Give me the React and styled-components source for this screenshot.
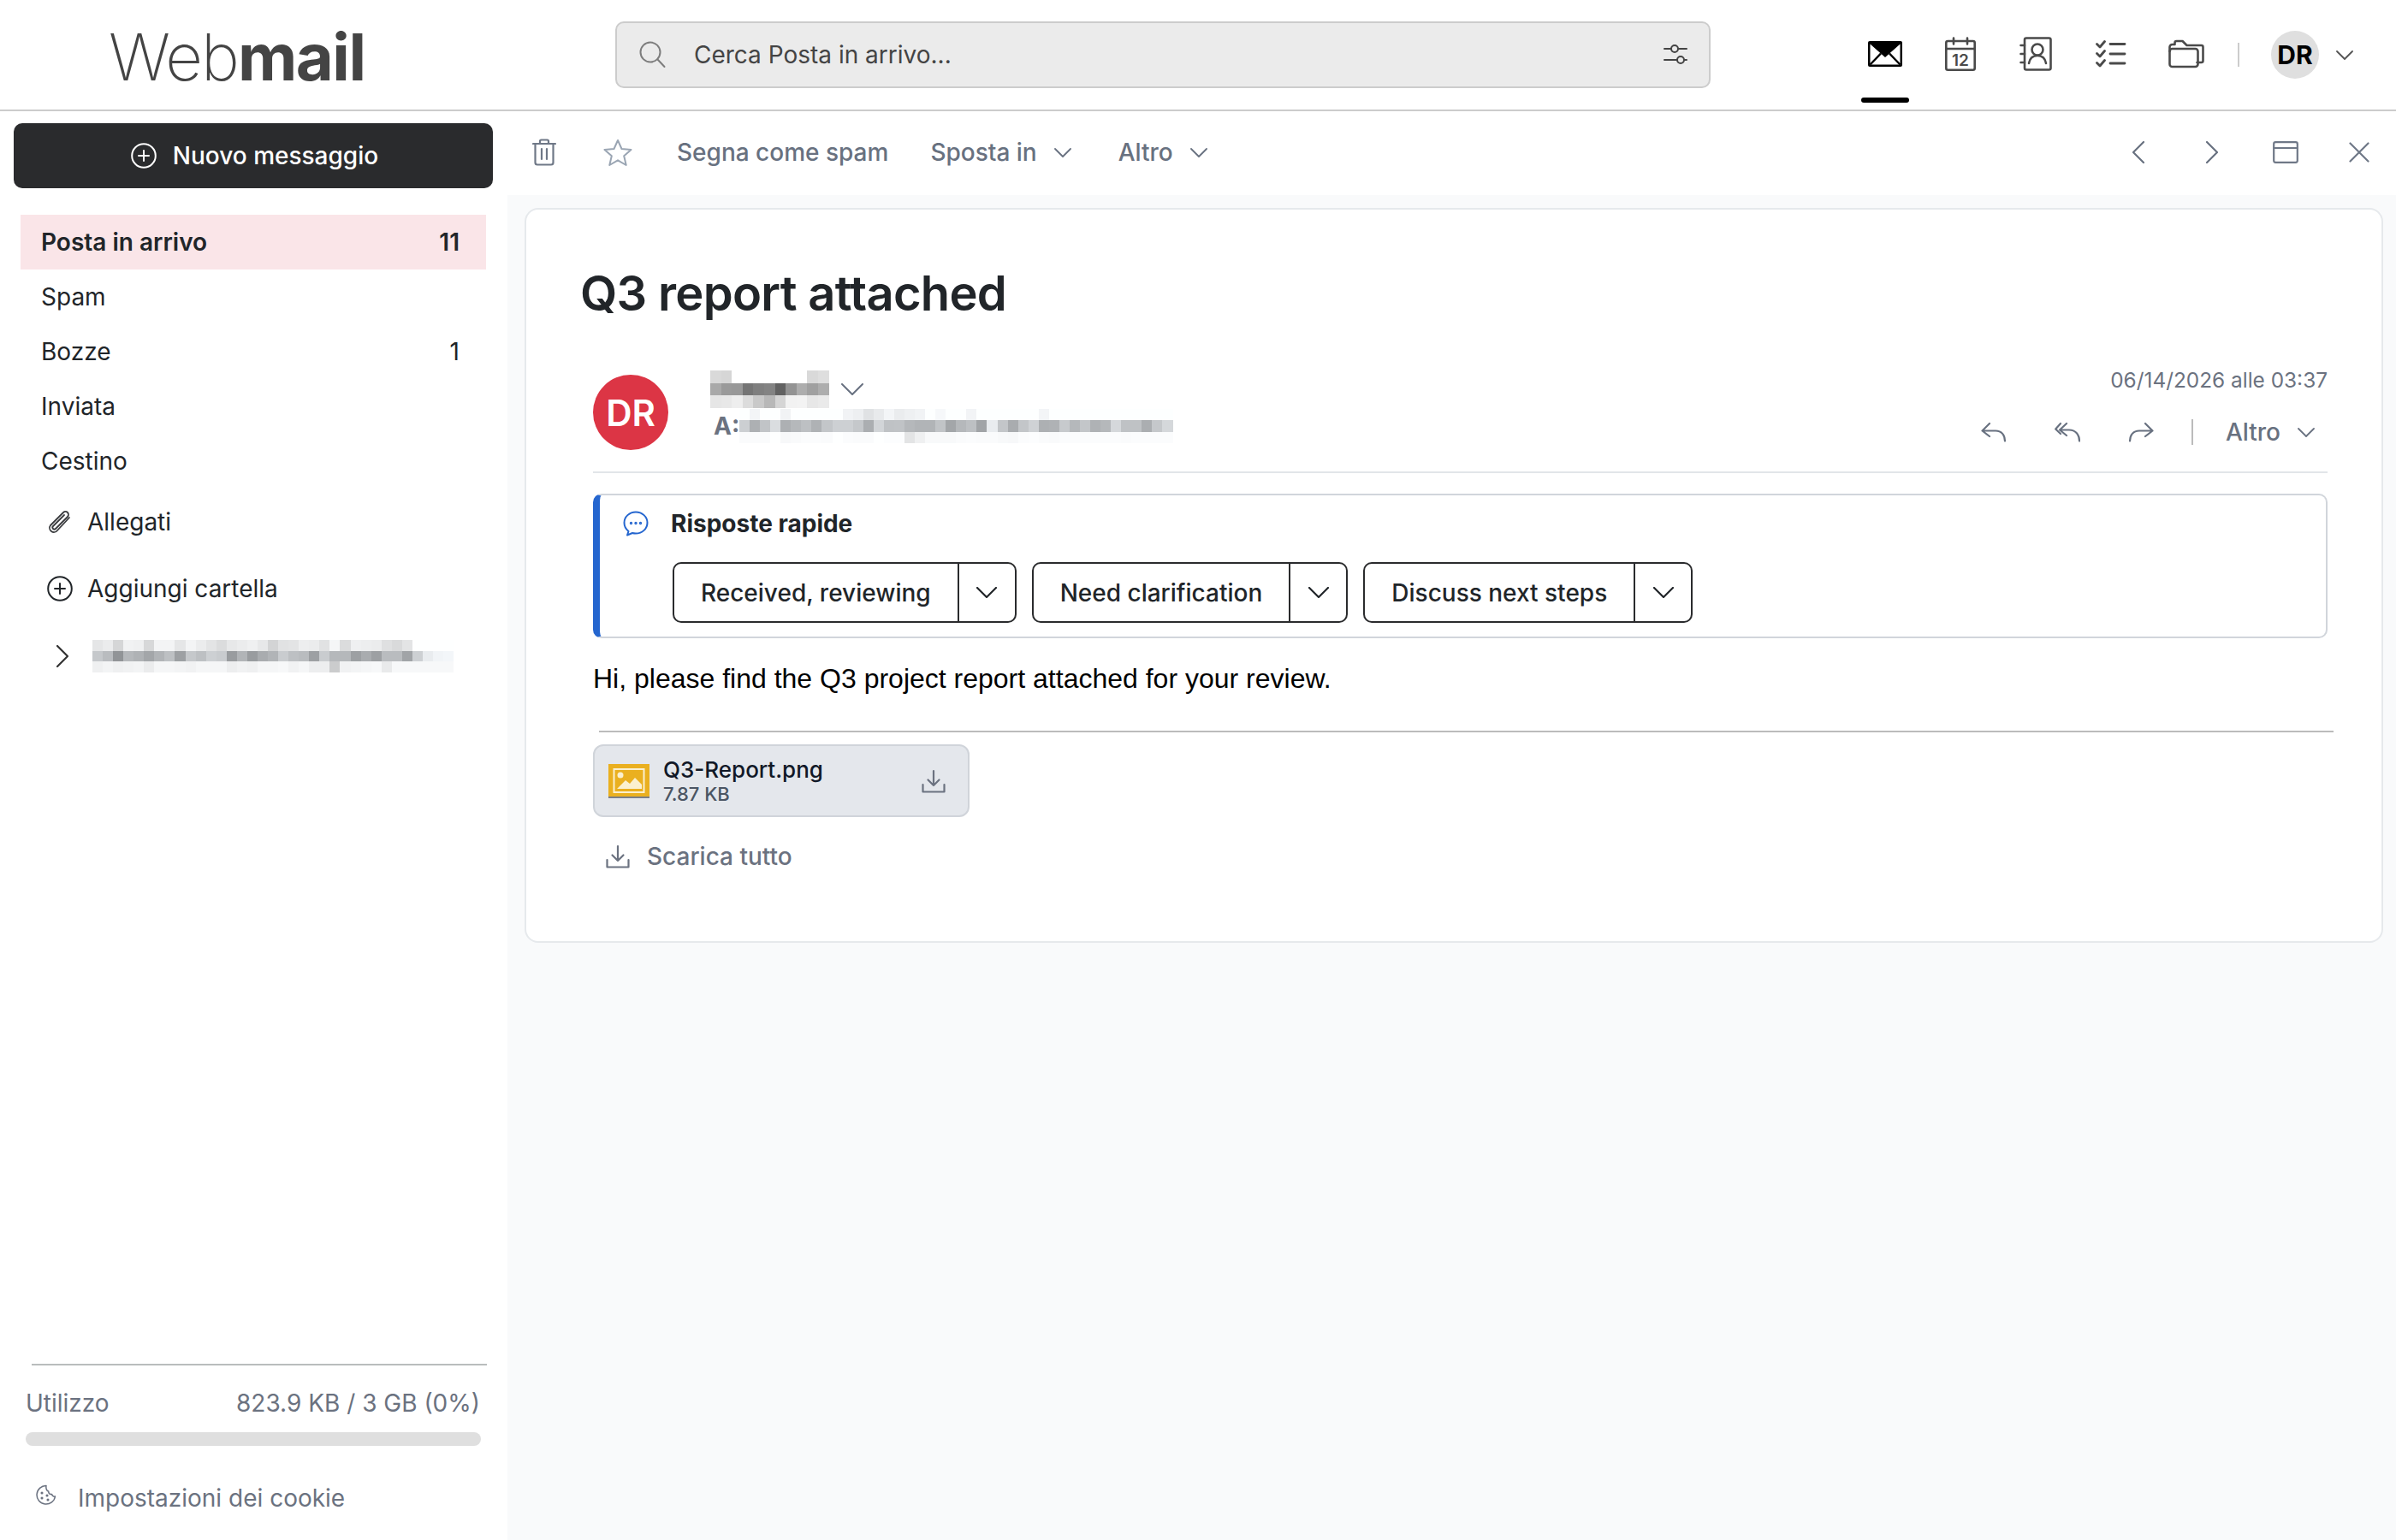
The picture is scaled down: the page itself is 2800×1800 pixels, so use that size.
import React from 'react';
import styled, { createGlobalStyle } from 'styled-components';

const GlobalStyle = createGlobalStyle`
  html, body { margin: 0; padding: 0; background: #fff; }
  body { font-family: Inter, "Liberation Sans", sans-serif; color: #212529; }
`;

const Page = styled.div`
  width: 2800px;
  height: 1800px;
  display: flex;
  flex-direction: column;
  overflow: hidden;
`;

/* top bar */
const Header = styled.header`
  height: 130px;
  box-sizing: border-box;
  border-bottom: 2px solid #ccc;
  display: flex;
  align-items: center;
  flex-shrink: 0;
`;
const Logo = styled.div`
  width: 592px;
  margin-left: 127px;
  flex-shrink: 0;
  font-size: 76px;
  line-height: 76px;
  letter-spacing: -2px;
  color: #444;
  font-weight: 200;
  position: relative;
  top: 2px;
  b { font-weight: 700; letter-spacing: -1.5px; }
`;
const SearchBox = styled.div`
  width: 1280px;
  height: 78px;
  box-sizing: border-box;
  border: 2px solid #ccc;
  border-radius: 10px;
  background: #ebebeb;
  display: flex;
  align-items: center;
  padding: 0 25px;
  font-size: 28px;
  color: #444;
`;
const SearchText = styled.span`
  margin-left: 33px;
  flex: 1;
`;
const Nav = styled.nav`
  margin-left: 160px;
  display: flex;
  align-items: center;
  height: 128px;
`;
const NavItem = styled.div`
  width: 88px;
  height: 128px;
  display: flex;
  align-items: center;
  justify-content: center;
  position: relative;
  padding-bottom: 0;
  svg { position: relative; top: -1px; }
  ${(p) => p.$active && `
    &::after {
      content: "";
      position: absolute;
      left: 16px;
      top: 114px;
      width: 56px;
      height: 6px;
      border-radius: 3px;
      background: #000;
    }
  `}
`;
const NavDivider = styled.div`
  width: 2px;
  height: 28px;
  background: #ccc;
  margin-left: 16px;
`;
const UserAvatar = styled.div`
  width: 56px;
  height: 56px;
  border-radius: 50%;
  background: #dfdfdf;
  color: #000;
  font-size: 30px;
  font-weight: 700;
  display: flex;
  align-items: center;
  justify-content: center;
  margin-left: 37px;
  margin-right: 20px;
`;

/* layout */
const Body = styled.div`
  flex: 1;
  display: flex;
  min-height: 0;
`;

/* sidebar */
const Sidebar = styled.aside`
  width: 593px;
  flex-shrink: 0;
  box-sizing: border-box;
  display: flex;
  flex-direction: column;
  background: #fff;
`;
const ComposeButton = styled.button`
  margin: 14px 17px 0 16px;
  height: 76px;
  border: 0;
  border-radius: 10px;
  background: #2a2b2d;
  color: #fff;
  font: 500 28px Inter, sans-serif;
  display: flex;
  align-items: center;
  justify-content: center;
  gap: 19px;
  padding-left: 9px;
`;
const FolderList = styled.div`
  margin: 31px 25px 0 24px;
  display: flex;
  flex-direction: column;
`;
const FolderRow = styled.div`
  height: 64px;
  flex-shrink: 0;
  display: flex;
  align-items: center;
  justify-content: space-between;
  padding: 0 31px 0 24px;
  font-size: 28px;
  font-weight: ${(p) => (p.$active ? 600 : 400)};
  background: ${(p) => (p.$active ? '#fae5e8' : 'transparent')};
`;
const ExtraRow = styled.div`
  height: 78px;
  display: flex;
  align-items: center;
  gap: 17px;
  padding-left: 55px;
  font-size: 28px;
`;
const TreeRow = styled.div`
  height: 80px;
  display: flex;
  align-items: center;
  gap: 28px;
  padding-left: 66px;
`;
const SideFooter = styled.div`
  margin-top: auto;
  height: 206px;
  box-sizing: border-box;
  display: flex;
  flex-direction: column;
`;
const FooterRule = styled.div`
  height: 2px;
  margin: 0 24px 0 37px;
  background: #b9bdbd;
`;
const UsageRow = styled.div`
  display: flex;
  justify-content: space-between;
  margin: 27px 32px 0 30px;
  font-size: 28px;
  line-height: 34px;
  color: #6b7280;
`;
const UsageTrack = styled.div`
  height: 16px;
  margin: 17px 31px 0 30px;
  border-radius: 8px;
  background: #dfdfdf;
`;
const CookieRow = styled.div`
  display: flex;
  align-items: center;
  gap: 25px;
  margin: 44px 0 0 41px;
  font-size: 28px;
  line-height: 34px;
  color: #6b7280;
  svg { position: relative; top: -4px; }
`;

/* mail pane */
const Main = styled.main`
  flex: 1;
  min-width: 0;
  display: flex;
  flex-direction: column;
`;
const Toolbar = styled.div`
  height: 98px;
  flex-shrink: 0;
  display: flex;
  align-items: center;
  background: #fff;
  padding-bottom: 2px;
  box-sizing: border-box;
`;
const IconButton = styled.div`
  width: 86px;
  height: 60px;
  display: flex;
  align-items: center;
  justify-content: center;
`;
const ToolText = styled.div`
  display: flex;
  align-items: center;
  gap: 20px;
  margin-left: ${(p) => p.$gap}px;
  font-size: 28px;
  font-weight: 500;
  color: #687180;
`;
const ToolSpacer = styled.div`
  flex: 1;
`;
const Content = styled.div`
  flex: 1;
  background: #f9fafb;
  padding: 15px 15px 0 20px;
`;
const Card = styled.article`
  box-sizing: border-box;
  height: 859px;
  border: 2px solid #e6e9ec;
  border-radius: 16px;
  background: #fff;
  padding: 64px 63px 0 78px;
`;
const Subject = styled.h1`
  margin: 0 0 0 -15px;
  font-size: 56px;
  line-height: 68px;
  font-weight: 600;
  letter-spacing: -0.7px;
  color: #212529;
`;
const SenderRow = styled.div`
  margin-top: 55px;
  height: 121px;
  box-sizing: border-box;
  border-bottom: 2px solid #e2e5e9;
  display: flex;
`;
const SenderAvatar = styled.div`
  width: 88px;
  height: 88px;
  margin-top: 6px;
  border-radius: 50%;
  background: #dc3545;
  color: #fff;
  font-size: 42px;
  font-weight: 600;
  display: flex;
  align-items: center;
  justify-content: center;
  flex-shrink: 0;
`;
const SenderInfo = styled.div`
  margin-left: 49px;
  display: flex;
  flex-direction: column;
  gap: 2px;
`;
const NameLine = styled.div`
  display: flex;
  align-items: center;
  gap: 14px;
  height: 44px;
  svg { position: relative; top: 1px; }
`;
const ToLine = styled.div`
  display: flex;
  align-items: center;
  font-size: 28px;
  font-weight: 700;
  color: #6b7280;
  width: 538px;
  padding-left: 4px;
  box-sizing: border-box;
  justify-content: space-between;
`;
const MetaColumn = styled.div`
  margin-left: auto;
  display: flex;
  flex-direction: column;
  align-items: flex-end;
`;
const DateText = styled.div`
  font-size: 24.4px;
  line-height: 24px;
  color: #6b7280;
`;
const ActionRow = styled.div`
  display: flex;
  align-items: center;
  margin-top: 33px;
  height: 32px;
`;
const ActionIcon = styled.div`
  width: 86px;
  display: flex;
  justify-content: center;
`;
const ActionRule = styled.div`
  width: 2px;
  height: 30px;
  background: #bbb;
  margin: 0 38px 0 16px;
`;
const ActionMore = styled.div`
  display: flex;
  align-items: center;
  gap: 20px;
  font-size: 28px;
  font-weight: 500;
  color: #687180;
  margin-right: 15px;
`;
const QuickBox = styled.section`
  margin-top: 24px;
  height: 169px;
  box-sizing: border-box;
  border: 2px solid #d1d5db;
  border-left: 8px solid #2566cf;
  border-radius: 10px;
`;
const QuickHead = styled.div`
  height: 65px;
  display: flex;
  align-items: center;
  gap: 26px;
  padding-left: 27px;
  font-size: 28px;
  font-weight: 700;
`;
const QuickButtons = styled.div`
  margin: 13px 0 0 85px;
  display: flex;
  gap: 18px;
`;
const SplitButton = styled.div`
  height: 71px;
  box-sizing: border-box;
  border: 2px solid #2a2b2d;
  border-radius: 10px;
  display: flex;
  align-items: center;
  font-size: 28px;
  font-weight: 500;
  color: #212529;
`;
const SplitLabel = styled.span`
  padding: 0 31px;
  height: 100%;
  display: flex;
  align-items: center;
  border-right: 2px solid #2a2b2d;
`;
const SplitCaret = styled.span`
  width: 65px;
  display: flex;
  justify-content: center;
`;
const MessageBody = styled.p`
  margin: 24px 0 0;
  font-family: "Liberation Sans", Arial, sans-serif;
  font-size: 32px;
  line-height: 46px;
  color: #000;
`;
const BodyRule = styled.hr`
  margin: 38px -7px 0 7px;
  border: 0;
  height: 2px;
  background: #bbb;
`;
const AttachmentChip = styled.div`
  margin-top: 14px;
  width: 440px;
  height: 85px;
  box-sizing: border-box;
  border: 2px solid #d0d4da;
  border-radius: 12px;
  background: #e4e7ec;
  display: flex;
  align-items: center;
  padding: 0 26px 0 16px;
`;
const AttachmentInfo = styled.div`
  margin-left: 16px;
  flex: 1;
  display: flex;
  flex-direction: column;
`;
const AttachmentName = styled.div`
  font-size: 26px;
  line-height: 31px;
  font-weight: 500;
  color: #111827;
`;
const AttachmentSize = styled.div`
  font-size: 22px;
  line-height: 26px;
  font-weight: 500;
  color: #4b5563;
`;
const DownloadAll = styled.div`
  margin: 26px 0 0 15px;
  height: 40px;
  display: flex;
  align-items: center;
  gap: 20px;
  font-size: 28px;
  font-weight: 500;
  color: #6b7280;
`;

const Glyph = styled.svg`
  display: block;
  flex-shrink: 0;
  fill: none;
  stroke: ${(p) => p.$color || 'currentColor'};
  stroke-width: ${(p) => p.$weight || 2};
  stroke-linecap: round;
  stroke-linejoin: round;
`;

const Icon = ({ w, h = w, color, weight, children }) => (
  <Glyph width={w} height={h} viewBox={`0 0 ${w} ${h}`} $color={color} $weight={weight}>{children}</Glyph>
);

const Chevron = ({ w = 20, color = '#687180', dir = 'down', weight = 1.8 }) => {
  if (dir === 'left') return <Icon w={14} h={26} color={color} weight={2.2}><path d="M13 1 1 13l12 12" /></Icon>;
  if (dir === 'right') return <Icon w={14} h={26} color={color} weight={2.2}><path d="m1 1 12 12L1 25" /></Icon>;
  const h = Math.round(w * 0.55);
  return <Icon w={w} h={h} color={color} weight={weight}><path d={`M1 1 ${w / 2} ${h - 1} ${w - 1} 1`} /></Icon>;
};

const PlusCircle = ({ size = 30, color }) => (
  <Icon w={size} h={size} color={color}>
    <circle cx={size / 2} cy={size / 2} r={size / 2 - 1.2} />
    <path d={`M${size / 2} ${size * 0.3}v${size * 0.4}M${size * 0.3} ${size / 2}h${size * 0.4}`} />
  </Icon>
);

const DownloadIcon = ({ color = '#6b7280' }) => (
  <Icon w={28} h={28} color={color} weight={2.2}>
    <path d="M14 2v17M7.5 12.5 14 19l6.500-6.500M1.500 18v8.500h25V18" />
  </Icon>
);

const ReplyIcon = () => (
  <Icon w={30} h={24} color="#687180" weight={2.2}>
    <path d="M10 2 1.500 10.500 10 17M1.500 10.500H17c7 0 11 5 11 12" />
  </Icon>
);
const ReplyAllIcon = () => (
  <Icon w={30} h={24} color="#687180" weight={2.2}>
    <path d="M7 2 1.200 8.500 7 14M14 2 6 9.500 14 16M6.500 9.500H17c7 0 12 5 12 13" />
  </Icon>
);
const ForwardIcon = () => (
  <Icon w={30} h={24} color="#687180" weight={2.2}>
    <path d="M20 2l8.500 8.500L20 17M28.500 10.500H13c-7 0-11 5-11 12" />
  </Icon>
);

const MAIL_DARK = '#4a4a4a';

// pixelated blocks hiding the addresses
const Mosaic = ({ rows, cell, rowH }) => {
  const cols = Math.max(...rows.map((r) => r.length));
  return (
    <svg width={cols * cell} height={rows.length * rowH} shapeRendering="crispEdges" style={{ display: 'block', flexShrink: 0 }}>
      {rows.map((row, y) => row.map((g, x) => (
        <rect key={`${x}-${y}`} x={x * cell} y={y * rowH} width={cell + 0.5} height={rowH + 0.5} fill={g} />
      )))}
    </svg>
  );
};
const shades = (s, tint = 0) => s.split(' ').map((v) => {
  const n = parseInt(v, 16);
  return `rgb(${n - tint},${n},${Math.min(255, n + tint)})`;
});

const nameBlur = [
  shades('d9 d6 ff ff ff ff ff ff ff d9 de'),
  shades('a9 9a 98 75 7f 83 62 93 ad a0 ad'),
  shades('e6 e8 ee dc c9 b8 d5 f2 f3 e7 ea'),
];
const toBlur = [
  shades('ff f5 ff ff f3 ff ff ff ff ff f3 ef e2 ea f5 ec f0 f3 ff f8 ff ff f4 ff ff ff ff ff ff f5 ff ff ff ff ff ff ff ff ff ff ff ff', 2),
  shades('cf b0 c4 dd b0 b8 c0 b2 c6 d0 d0 c8 ae d5 c2 c3 b8 b4 b4 c4 a6 b8 c0 a4 ec c6 ac c6 d2 b0 b2 ca b8 c6 b2 b8 d8 c2 c2 ae c8 d8', 3),
  shades('fb fb fb ff f8 fa fc fc fb ff fc fb fb ff fd fd e4 f0 f9 f9 f9 fb fc fb fb f9 f8 fc fd fb fa fc fc fc fc fc fc fb fc fc fc fc', 1),
];
const folderBlur = [
  shades('e6 ec d6 f2 f0 d8 f4 f4 e6 f4 ec e4 dc e8 ec f0 e8 d4 e2 e4 ee ec e2 f6 dc f0 ee ec e0 da e4 ff ff ff ff', 1),
  shades('c8 bc 94 b8 b2 a6 b4 c0 a0 c8 c0 d0 cc 9c b4 9c ac b4 cc c0 bc a0 cc b8 b8 a0 ac a0 bc bc a4 d0 ec f4 f6', 3),
  shades('f0 f4 f0 f2 f4 ec f6 f6 f4 f2 f6 f6 f6 ee f2 f0 f6 f6 f8 f2 f6 ee ee cc f2 f4 f6 f8 ea f8 f8 f8 f8 f8 f8', 1),
];

const replies = ['Received, reviewing', 'Need clarification', 'Discuss next steps'];

export default function App() {
  return (
    <Page>
      <GlobalStyle />
      <Header>
        <Logo>Web<b>mail</b></Logo>
        <SearchBox>
          <Icon w={32} h={32} color="#7d7d7d" weight={2}>
            <circle cx="14" cy="13" r="11.500" /><path d="m22.500 21.500 8 8.500" />
          </Icon>
          <SearchText>Cerca Posta in arrivo...</SearchText>
          <Icon w={28} h={24} color="#444" weight={2}>
            <path d="M1 5h8M17 5h10M1 18h15M24 18h3" />
            <circle cx="13" cy="5" r="4" /><circle cx="20" cy="18" r="4" />
          </Icon>
        </SearchBox>
        <Nav>
          <NavItem $active>
            <svg width="40" height="30" viewBox="0 0 40 30">
              <rect width="40" height="30" rx="2" fill="#000" />
              <path d="M2.500 3.500 20 19 37.500 3.500V27.500H2.500Z" fill="#fff" />
              <path d="M2.500 27.500 15 14.500M37.500 27.500 25 14.500" stroke="#000" strokeWidth="2.500" />
            </svg>
          </NavItem>
          <NavItem>
            <Icon w={36} h={40} color={MAIL_DARK} weight={2.600}>
              <rect x="1.300" y="5" width="33.400" height="33.700" rx="2" />
              <path d="M1.500 14h33M10 1.500v7M26 1.500v7" />
              <text x="18" y="34" textAnchor="middle" fontFamily="Inter, sans-serif" fontSize="19" fontWeight="600" fill={MAIL_DARK} stroke="none">12</text>
            </Icon>
          </NavItem>
          <NavItem>
            <Icon w={38} h={40} color={MAIL_DARK} weight={2.600}>
              <rect x="6" y="1.500" width="30.500" height="37" rx="2" />
              <path d="M1.500 10H6M1.500 20H6M1.500 30H6" />
              <circle cx="21" cy="15" r="6.500" />
              <path d="M11 31c1-6 5-9 10-9s9 3 10 9" />
            </Icon>
          </NavItem>
          <NavItem>
            <Icon w={36} h={32} color={MAIL_DARK} weight={2.800}>
              <path d="m1.500 4.500 3.500 3.500 5.500-6.500M1.500 15.500 5 19l5.500-6.500M1.500 26.500 5 30l5.500-6.500" />
              <path d="M17 4.500h17M17 16h17M17 27h17" />
            </Icon>
          </NavItem>
          <NavItem>
            <Icon w={42} h={34} color={MAIL_DARK} weight={2.600}>
              <path d="M1.500 14a3 3 0 0 1 3-3h27a3 3 0 0 1 3 3v15a3 3 0 0 1-3 3h-27a3 3 0 0 1-3-3Z" />
              <path d="M1.500 14v-5a3 3 0 0 1 3-3h3V4a2 2 0 0 1 2-2h7l5 5h17a2 2 0 0 1 2 2v16a2 2 0 0 1-2 2h-5" />
            </Icon>
          </NavItem>
          <NavDivider />
          <UserAvatar>DR</UserAvatar>
          <Chevron w={20} color="#555" />
        </Nav>
      </Header>
      <Body>
        <Sidebar>
          <ComposeButton>
            <PlusCircle size={30} color="#fff" />
            Nuovo messaggio
          </ComposeButton>
          <FolderList>
            <FolderRow $active><span>Posta in arrivo</span><span>11</span></FolderRow>
            <FolderRow><span>Spam</span></FolderRow>
            <FolderRow><span>Bozze</span><span>1</span></FolderRow>
            <FolderRow><span>Inviata</span></FolderRow>
            <FolderRow><span>Cestino</span></FolderRow>
          </FolderList>
          <ExtraRow>
            <Icon w={30} h={30} color="#3a3c3f" weight={1.800}>
              <path d="M26 10 12 25a5 5 0 0 1-8-6L19 4a3.500 3.500 0 0 1 5 5L10 23a1.800 1.800 0 0 1-3-3L20 7" />
            </Icon>
            Allegati
          </ExtraRow>
          <ExtraRow>
            <PlusCircle size={30} color="#212529" />
            Aggiungi cartella
          </ExtraRow>
          <TreeRow>
            <Chevron dir="right" color="#333" />
            <Mosaic rows={folderBlur} cell={12.060} rowH={12.700} />
          </TreeRow>
          <SideFooter>
            <FooterRule />
            <UsageRow><span>Utilizzo</span><span>823.9 KB / 3 GB (0%)</span></UsageRow>
            <UsageTrack />
            <CookieRow>
              <Icon w={25} h={24} color="#6b7280" weight={1.500}>
                <path d="M13 1.500a10.800 10.800 0 1 0 10.500 12.500c-2 .5-3.500-.5-4-2.500-2 .5-4-1-3.800-3.500C13.500 8 12.500 4.500 13 1.500Z" />
                <circle cx="8" cy="10" r=".8" /><circle cx="8" cy="16" r=".8" /><circle cx="14" cy="13" r=".8" /><circle cx="15" cy="18" r=".8" />
              </Icon>
              Impostazioni dei cookie
            </CookieRow>
          </SideFooter>
        </Sidebar>
        <Main>
          <Toolbar>
            <IconButton>
              <Icon w={28} h={32} color="#6f7887" weight={2.200}>
                <path d="M1 6h26M3.500 6v22a2.500 2.500 0 0 0 2.500 2.500h16a2.500 2.500 0 0 0 2.500-2.500V6M9 6V3a1.500 1.500 0 0 1 1.500-1.500h7A1.500 1.500 0 0 1 19 3v3M11 12v12M17 12v12" />
              </Icon>
            </IconButton>
            <IconButton>
              <Icon w={34} h={32} color="#9aa5b3" weight={2}>
                <path d="M17 2l4.500 10 11 1-8.300 7.200 2.500 10.800L17 25.300 7.300 31l2.500-10.800L1.500 13l11-1Z" />
              </Icon>
            </IconButton>
            <ToolText $gap={26}>Segna come spam</ToolText>
            <ToolText $gap={49}>Sposta in<Chevron /></ToolText>
            <ToolText $gap={55}>Altro<Chevron /></ToolText>
            <ToolSpacer />
            <IconButton><Chevron dir="left" /></IconButton>
            <IconButton><Chevron dir="right" /></IconButton>
            <IconButton>
              <Icon w={30} h={26} color="#6f7887" weight={2.200}>
                <rect x="1.200" y="1.200" width="27.600" height="23.600" rx="2" /><path d="M1.500 8h27" />
              </Icon>
            </IconButton>
            <IconButton>
              <Icon w={24} h={24} color="#6f7887" weight={2.200}>
                <path d="M1.500 1.500l21 21M22.500 1.500l-21 21" />
              </Icon>
            </IconButton>
          </Toolbar>
          <Content>
            <Card>
              <Subject>Q3 report attached</Subject>
              <SenderRow>
                <SenderAvatar>DR</SenderAvatar>
                <SenderInfo>
                  <NameLine>
                    <Mosaic rows={nameBlur} cell={12.600} rowH={14.700} />
                    <Chevron w={26} weight={2} />
                  </NameLine>
                  <ToLine>
                    A:
                    <Mosaic rows={toBlur} cell={12.060} rowH={13.300} />
                  </ToLine>
                </SenderInfo>
                <MetaColumn>
                  <DateText>06/14/2026 alle 03:37</DateText>
                  <ActionRow>
                    <ActionIcon><ReplyIcon /></ActionIcon>
                    <ActionIcon><ReplyAllIcon /></ActionIcon>
                    <ActionIcon><ForwardIcon /></ActionIcon>
                    <ActionRule />
                    <ActionMore>Altro<Chevron /></ActionMore>
                  </ActionRow>
                </MetaColumn>
              </SenderRow>
              <QuickBox>
                <QuickHead>
                  <Icon w={30} h={30} color="#2566cf" weight={2}>
                    <path d="M15 1.500C7.500 1.500 1.500 7 1.500 14c0 4 2 7.500 5 10l-1.500 4.500 6-2.500c1.200.3 2.600.5 4 .5 7.500 0 13.500-5.500 13.500-12.500S22.500 1.500 15 1.500Z" />
                    <circle cx="9.500" cy="14.500" r=".7" /><circle cx="15" cy="14.500" r=".7" /><circle cx="20.500" cy="14.500" r=".7" />
                  </Icon>
                  Risposte rapide
                </QuickHead>
                <QuickButtons>
                  {replies.map((text) => (
                    <SplitButton key={text}>
                      <SplitLabel>{text}</SplitLabel>
                      <SplitCaret><Chevron w={24} color="#212529" weight={2.200} /></SplitCaret>
                    </SplitButton>
                  ))}
                </QuickButtons>
              </QuickBox>
              <MessageBody>Hi, please find the Q3 project report attached for your review.</MessageBody>
              <BodyRule />
              <AttachmentChip>
                <svg width="48" height="40" viewBox="0 0 48 40" style={{ flexShrink: 0 }}>
                  <rect width="48" height="39" fill="#eab020" />
                  <rect y="38" width="48" height="2" fill="#7a7f86" />
                  <rect x="6.500" y="6" width="35" height="27" fill="none" stroke="#fbf0cf" strokeWidth="2" />
                  <circle cx="14" cy="13" r="3.500" fill="#fbf0cf" />
                  <path d="M10 29l10-10 5 4 6-7 8 8v5Z" fill="#fbf0cf" />
                </svg>
                <AttachmentInfo>
                  <AttachmentName>Q3-Report.png</AttachmentName>
                  <AttachmentSize>7.87 KB</AttachmentSize>
                </AttachmentInfo>
                <DownloadIcon />
              </AttachmentChip>
              <DownloadAll>
                <DownloadIcon />
                Scarica tutto
              </DownloadAll>
            </Card>
          </Content>
        </Main>
      </Body>
    </Page>
  );
}
